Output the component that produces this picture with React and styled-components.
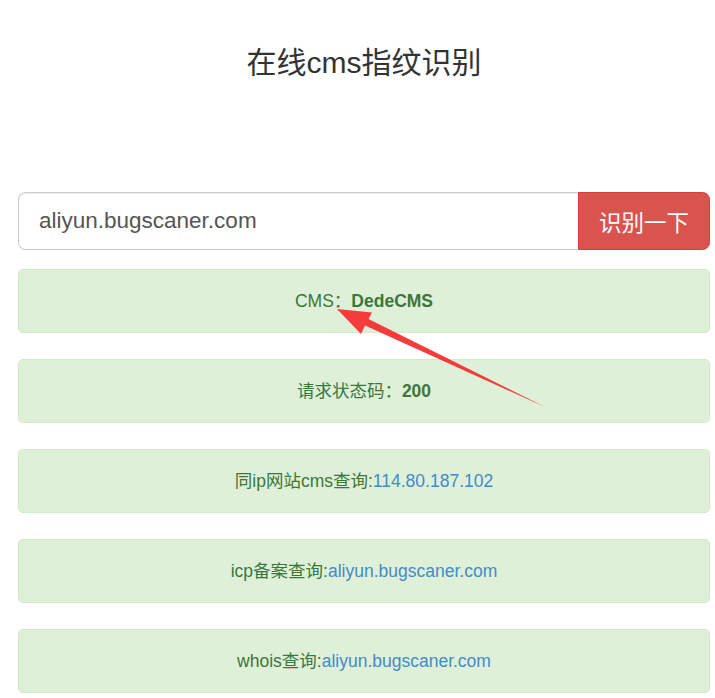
import styled, { createGlobalStyle } from "styled-components";

const GlobalStyle = createGlobalStyle`
  html, body {
    margin: 0;
    padding: 0;
    background: #fff;
  }
  body {
    font-family: "Liberation Sans", "Noto Sans CJK SC", sans-serif;
    color: #333;
  }
`;

const Page = styled.div`
  position: relative;
  width: 715px;
  height: 698px;
  overflow: hidden;
  padding: 0 5px 0 18px;
  box-sizing: border-box;
`;

const Title = styled.h2`
  margin: 0;
  padding-top: 46px;
  height: 192px;
  box-sizing: border-box;
  font-size: 30px;
  font-weight: 400;
  line-height: 1.1;
  text-align: center;
  color: #333;
`;

const InputGroup = styled.form`
  display: flex;
  height: 57.5px;
  margin: 0 0 19.5px;
`;

const UrlInput = styled.input`
  flex: 1;
  min-width: 0;
  height: 100%;
  box-sizing: border-box;
  padding: 0 20px;
  font-family: "Liberation Sans", "Noto Sans CJK SC", sans-serif;
  font-size: 22.5px;
  color: #555;
  background: #fff;
  border: 1px solid #ccc;
  border-right: none;
  border-radius: 7.5px 0 0 7.5px;
  box-shadow: inset 0 1px 1px rgba(0, 0, 0, 0.075);
  outline: none;
`;

const SubmitButton = styled.button`
  width: 132px;
  height: 100%;
  box-sizing: border-box;
  padding: 0 20px;
  font-family: "Liberation Sans", "Noto Sans CJK SC", sans-serif;
  font-size: 22.5px;
  color: #fff;
  background: #d9534f;
  border: 1px solid #d43f3a;
  border-radius: 0 7.5px 7.5px 0;
  cursor: pointer;
`;

const ResultList = styled.div`
  display: flex;
  flex-direction: column;
  gap: 26px;
`;

const Alert = styled.div`
  height: 64px;
  box-sizing: border-box;
  padding: 18.5px;
  line-height: 25px;
  font-size: 17.5px;
  text-align: center;
  color: #3c763d;
  background: #dff0d8;
  border: 1px solid #d6e9c6;
  border-radius: 5px;

  b {
    font-weight: 700;
  }
`;

const Link = styled.a`
  color: #428bca;
  text-decoration: none;
`;

const Arrow = styled.svg`
  position: absolute;
  top: 0;
  left: 0;
  pointer-events: none;
`;

const results = [
  { label: "CMS：", bold: "DedeCMS" },
  { label: "请求状态码：", bold: "200" },
  { label: "同ip网站cms查询:", link: "114.80.187.102" },
  { label: "icp备案查询:", link: "aliyun.bugscaner.com" },
  { label: "whois查询:", link: "aliyun.bugscaner.com" },
];

const App = () => {
  return (
    <Page>
      <GlobalStyle />
      <Title>在线cms指纹识别</Title>
      <InputGroup onSubmit={(e) => e.preventDefault()}>
        <UrlInput type="text" defaultValue="aliyun.bugscaner.com" />
        <SubmitButton type="submit">识别一下</SubmitButton>
      </InputGroup>
      <ResultList>
        {results.map((r, i) => (
          <Alert key={i}>
            {r.label}
            {r.bold && <b>{r.bold}</b>}
            {r.link && <Link href="#">{r.link}</Link>}
          </Alert>
        ))}
      </ResultList>
      <Arrow width="715" height="698" viewBox="0 0 715 698">
        <polygon
          points="337,309 372,312.5 368.5,319 546,407.5 365,325.5 361,334"
          fill="#f43c3c"
        />
      </Arrow>
    </Page>
  );
};

export default App;
